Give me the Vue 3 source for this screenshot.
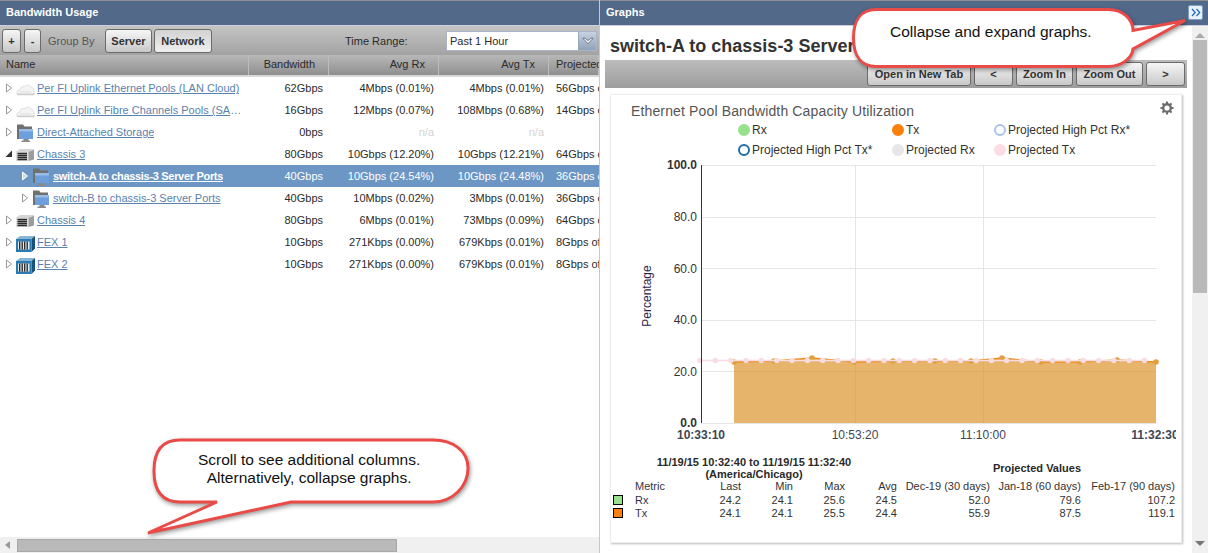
<template>
  <div class="page">
    <section class="left">
      <header class="pane-head">Bandwidth Usage</header>
      <div class="tools">
        <button class="btn plus">+</button>
        <button class="btn minus">-</button>
        <span class="group-by">Group By</span>
        <button class="btn server">Server</button>
        <button class="btn network">Network</button>
        <span class="time-label">Time Range:</span>
        <div class="select">
          <span class="select-text">Past 1 Hour</span>
          <span class="select-arrow">
            <svg width="12" height="8" viewBox="0 0 12 8"><path d="M.8 1.200h2.400L6 3.600l2.800-2.400h2.400L6 6.800z" fill="#eef2f6" stroke="#56646f" stroke-width=".8"/></svg>
          </span>
        </div>
      </div>
      <div class="cols">
        <span class="c-name">Name</span>
        <span class="c-bw">Bandwidth</span>
        <span class="c-rx">Avg Rx</span>
        <span class="c-tx">Avg Tx</span>
        <span class="c-pr">Projected</span>
      </div>
      <div class="rows">
        <div v-for="row in rows" :key="row.name" class="row" :class="{ selected: row.selected }">
          <div class="name" :class="{ child: row.child }">
            <svg class="twisty" width="8" height="10" viewBox="0 0 8 10">
              <path v-if="row.open" d="M7 1.500V8H.5z" fill="#333"/>
              <path v-else d="M1.500 1v8L6.500 5z" :fill="row.selected ? '#cfdcec' : '#fff'" :stroke="row.selected ? '#fff' : '#999'"/>
            </svg>
            <svg v-if="row.icon === 'cloud'" class="icon" width="20" height="20" viewBox="0 0 20 20">
              <path d="M1 16c-.8-2 .5-3.600 2.500-3.800C4 9.500 6.500 7.800 9 8.500c1.500-2 5-1.800 6 .7 2.200.3 3.600 2.500 3 6.800z" fill="#f4f4f4" stroke="#dedede"/>
              <path d="M1 16.500h17.500" stroke="#cdcdcd" stroke-width="1.500"/>
              <path d="M4 13h11v2.500H4z" fill="#e8e8e8"/>
            </svg>
            <svg v-else-if="row.icon === 'folder'" class="icon" width="20" height="20" viewBox="0 0 20 20">
              <path d="M1 2.500h6L8.500 4.500H16V7H3.500v10H1z" fill="#707070"/>
              <path d="M3 7h14v10H3z" fill="#6c9fdc"/>
              <path d="M3 7h14v2.500H3z" fill="#98bce6"/>
              <path d="M7.500 17h5v1.500H14V20H5.500v-1.500h2z" fill="#8a8a8a"/>
            </svg>
            <svg v-else-if="row.icon === 'chassis'" class="icon" width="20" height="20" viewBox="0 0 20 20">
              <path d="M0 7.500L4 5h14v2l-5 1.500H0z" fill="#d4d4d4"/>
              <path d="M0 7.500h12.500V17H0z" fill="#dedede"/>
              <path d="M12.500 8L18 6v9.500L12.500 17z" fill="#9c9c9c"/>
              <path d="M1.500 9.500h9.500M1.500 11.500h9.500M1.500 13.500h9.500M1.500 15.500h9.500" stroke="#2a2a2a" stroke-width="1.300"/>
            </svg>
            <svg v-else class="icon" width="20" height="20" viewBox="0 0 20 20">
              <path d="M0 7l4-3h15l-3.500 3z" fill="#84b6da"/>
              <path d="M15.500 7L19 4v12.500L15.500 20z" fill="#16517c"/>
              <path d="M0 7h15.500v13H0z" fill="#2b7bb0"/>
              <path d="M2 9.500h11.500v8H2z" fill="#e2ebf0"/>
              <path d="M3.700 9.500v8M6.200 9.500v8M8.700 9.500v8M11.200 9.500v8" stroke="#222" stroke-width="1.300"/>
            </svg>
            <a class="link">{{ row.name }}</a>
          </div>
          <span class="v-bw">{{ row.bw }}</span>
          <span class="v-rx" :class="{ na: row.rx === 'n/a' }">{{ row.rx }}</span>
          <span class="v-tx" :class="{ na: row.tx === 'n/a' }">{{ row.tx }}</span>
          <span class="v-pr">{{ row.pr }}</span>
        </div>
      </div>
      <div class="hscroll">
        <svg width="8" height="10" viewBox="0 0 8 10"><path d="M6 1v8L1 5z" fill="#999"/></svg>
        <div class="hthumb"></div>
      </div>
    </section>

    <section class="right">
      <header class="pane-head">Graphs</header>
      <div class="right-body">
        <div class="graph-area">
          <h1 class="graph-title">switch-A to chassis-3 Server Ports</h1>
          <div class="graph-tools">
            <button class="btn open-tab">Open in New Tab</button>
            <button class="btn nav">&lt;</button>
            <button class="btn zoom-in">Zoom In</button>
            <button class="btn zoom-out">Zoom Out</button>
            <button class="btn nav">&gt;</button>
          </div>
          <div class="card">
            <div class="card-title">Ethernet Pool Bandwidth Capacity Utilization</div>
            <svg class="gear" width="14" height="14" viewBox="0 0 14 14">
              <circle cx="7" cy="7" r="3.800" fill="none" stroke="#6d6d6d" stroke-width="2.400"/>
              <path d="M7 .5v2.500M7 11v2.500M.5 7H3M11 7h2.500M2.400 2.400l1.800 1.800M9.800 9.800l1.800 1.800M2.400 11.600l1.800-1.800M9.800 4.200l1.800-1.800" stroke="#6d6d6d" stroke-width="2"/>
            </svg>
            <div class="legend">
              <span v-for="item in legend" :key="item.label" class="legend-item">
                <i class="dot" :style="{ background: item.fill, borderColor: item.line }"></i>{{ item.label }}
              </span>
            </div>
            <svg class="chart" width="554" height="284" viewBox="0 0 554 284">
              <g stroke="#e6e6e6">
                <line v-for="y in gridY" :key="y" x1="79" x2="534" :y1="y" :y2="y"/>
                <line x1="233.500" x2="233.500" y1="9" y2="267"/>
                <line x1="361.500" x2="361.500" y1="9" y2="267"/>
              </g>
              <path :d="txArea" fill="#d98f1e" fill-opacity=".66"/>
              <polyline :points="txLine" fill="none" stroke="#f28a1c" stroke-width="1.500"/>
              <circle v-for="p in txPoints" :key="p[0]" :cx="p[0]" :cy="p[1]" r="2.800" fill="#e0a040"/>
              <line x1="78" x2="524" y1="204.500" y2="204.500" stroke="#f8dce3" stroke-width="1.500"/>
              <circle v-for="x in pinkDots" :key="x" :cx="x" cy="204.500" r="2.700" fill="#f8dce3"/>
              <line x1="79.500" x2="79.500" y1="9" y2="267" stroke="#333"/>
              <g class="ytick">
                <text x="75" y="13" font-weight="700" fill="#111">100.0</text>
                <text x="75" y="65">80.0</text>
                <text x="75" y="116.500">60.0</text>
                <text x="75" y="168">40.0</text>
                <text x="75" y="219.500">20.0</text>
                <text x="75" y="271" font-weight="700" fill="#111">0.0</text>
              </g>
              <text class="yaxis" transform="translate(29 140) rotate(-90)" text-anchor="middle">Percentage</text>
              <g class="xtick" text-anchor="middle">
                <text x="79" y="283" font-weight="700" fill="#111">10:33:10</text>
                <text x="233" y="283">10:53:20</text>
                <text x="361" y="283">11:10:00</text>
                <text x="533" y="283" font-weight="700" fill="#111">11:32:30</text>
              </g>
            </svg>
            <div class="stats">
              <div class="range">11/19/15 10:32:40 to 11/19/15 11:32:40<br>(America/Chicago)</div>
              <div class="proj">Projected Values</div>
              <div class="stat-table">
                <span></span><span class="tl">Metric</span>
                <span v-for="h in statHead" :key="h">{{ h }}</span>
                <template v-for="s in stats" :key="s.name">
                  <i class="swatch" :style="{ background: s.color }"></i>
                  <span class="tl">{{ s.name }}</span>
                  <span v-for="(v, i) in s.values" :key="i">{{ v }}</span>
                </template>
              </div>
            </div>
          </div>
        </div>
        <div class="vscroll">
          <svg width="10" height="6" viewBox="0 0 10 6"><path d="M0 6l5-5 5 5z" fill="#aaa"/></svg>
          <div class="vthumb"></div>
          <svg width="10" height="6" viewBox="0 0 10 6"><path d="M0 0l5 5 5-5z" fill="#777"/></svg>
        </div>
      </div>
      <button class="collapse">
        <svg width="10" height="9" viewBox="0 0 10 9"><path d="M1 1l3.200 3.500L1 8M5.500 1l3.200 3.500L5.500 8" fill="none" stroke="#2a6cc0" stroke-width="1.300"/></svg>
      </button>
    </section>

    <div class="callout top-callout">
      <svg class="bubble" width="345" height="60" viewBox="0 0 345 60">
        <path d="M24 1.500H256C272 1.500 281 12 281 22.500L333 12.500 281 41C280 50 270 58.500 256 58.500H24C10 58.500 1.500 49 1.500 30S10 1.500 24 1.500Z"/>
      </svg>
      <span class="callout-text one">Collapse and expand graphs.</span>
    </div>
    <div class="callout bottom-callout">
      <svg class="bubble" width="330" height="104" viewBox="0 0 330 104">
        <path d="M32 4H285C305 4 320 15 320 32 320 50 305 66 285 66H143L0 97 69 66H32C14 66 6 55 6 35 6 15 14 4 32 4Z"/>
      </svg>
      <span class="callout-text two">Scroll to see additional columns.<br>Alternatively, collapse graphs.</span>
    </div>
  </div>
</template>

<script setup>
const rows = [
  { name: 'Per FI Uplink Ethernet Pools (LAN Cloud)', icon: 'cloud', bw: '62Gbps', rx: '4Mbps (0.01%)', tx: '4Mbps (0.01%)', pr: '56Gbps of 80Gbps' },
  { name: 'Per FI Uplink Fibre Channels Pools (SAN Cloud)', icon: 'cloud', bw: '16Gbps', rx: '12Mbps (0.07%)', tx: '108Mbps (0.68%)', pr: '14Gbps of 16Gbps' },
  { name: 'Direct-Attached Storage', icon: 'folder', bw: '0bps', rx: 'n/a', tx: 'n/a', pr: '' },
  { name: 'Chassis 3', icon: 'chassis', open: true, bw: '80Gbps', rx: '10Gbps (12.20%)', tx: '10Gbps (12.21%)', pr: '64Gbps of 80Gbps' },
  { name: 'switch-A to chassis-3 Server Ports', icon: 'folder', child: true, selected: true, bw: '40Gbps', rx: '10Gbps (24.54%)', tx: '10Gbps (24.48%)', pr: '36Gbps of 40Gbps' },
  { name: 'switch-B to chassis-3 Server Ports', icon: 'folder', child: true, bw: '40Gbps', rx: '10Mbps (0.02%)', tx: '3Mbps (0.01%)', pr: '36Gbps of 40Gbps' },
  { name: 'Chassis 4', icon: 'chassis', bw: '80Gbps', rx: '6Mbps (0.01%)', tx: '73Mbps (0.09%)', pr: '64Gbps of 80Gbps' },
  { name: 'FEX 1', icon: 'fex', bw: '10Gbps', rx: '271Kbps (0.00%)', tx: '679Kbps (0.01%)', pr: '8Gbps of 10Gbps' },
  { name: 'FEX 2', icon: 'fex', bw: '10Gbps', rx: '271Kbps (0.00%)', tx: '679Kbps (0.01%)', pr: '8Gbps of 10Gbps' },
]

const legend = [
  { label: 'Rx', fill: '#98e08c', line: '#98e08c' },
  { label: 'Tx', fill: '#fb7f0c', line: '#fb7f0c' },
  { label: 'Projected High Pct Rx*', fill: '#fff', line: '#a9c4e8' },
  { label: 'Projected High Pct Tx*', fill: '#fff', line: '#1f6fa8' },
  { label: 'Projected Rx', fill: '#e6e6ea', line: '#e6e6ea' },
  { label: 'Projected Tx', fill: '#fbdde6', line: '#fbdde6' },
]

const gridY = [9.5, 61.5, 112.5, 164.5, 215.5, 267.5]

// x, y inside the chart svg
const txPoints = [
  [112, 206], [152, 205], [190, 202], [232, 206], [271, 205], [313, 205],
  [349, 205], [380, 202], [419, 206], [458, 206], [495, 204], [534, 206],
]
const txLine = txPoints.map((p) => p.join(',')).join(' ')
const txArea = `M112 267 L${txPoints.map((p) => p.join(' ')).join(' L')} L534 267 Z`
const pinkDots = Array.from({ length: 30 }, (_, i) => 78 + i * 15.33)

const statHead = ['Last', 'Min', 'Max', 'Avg', 'Dec-19 (30 days)', 'Jan-18 (60 days)', 'Feb-17 (90 days)']
const stats = [
  { name: 'Rx', color: '#98e08c', values: ['24.2', '24.1', '25.6', '24.5', '52.0', '79.6', '107.2'] },
  { name: 'Tx', color: '#fb7f0c', values: ['24.1', '24.1', '25.5', '24.4', '55.9', '87.5', '119.1'] },
]
</script>

<style>
html, body {
  margin: 0;
  background: #fff;
  overflow: hidden;
}
</style>

<style scoped>
.page {
  position: relative;
  display: flex;
  width: 1208px;
  height: 553px;
  overflow: hidden;
  font-family: "Liberation Sans", Arial, sans-serif;
  font-size: 11px;
  color: #2a2a2a;
}

.left {
  display: flex;
  flex-direction: column;
  width: 599px;
  height: 100%;
  flex: none;
  border-right: 1px solid #c8c8c8;
}

.right {
  position: relative;
  display: flex;
  flex-direction: column;
  flex: 1;
  min-width: 0;
}

.pane-head {
  height: 24px;
  line-height: 22px;
  padding-left: 6px;
  border-top: 1px solid #8f8f8f;
  border-bottom: 1px solid #c9d1dc;
  background: #52698a;
  color: #fff;
  font-size: 11px;
  font-weight: 700;
  flex: none;
}

.tools {
  display: flex;
  align-items: center;
  height: 29px;
  padding-left: 2px;
  background: linear-gradient(#c4c4c4, #a2a2a2);
  flex: none;
}

.btn {
  height: 24px;
  padding: 0;
  border: 1px solid #6b6b6b;
  border-radius: 3px;
  background: linear-gradient(#f6f6f6, #c8c8c8);
  font-family: inherit;
  font-size: 11px;
  font-weight: 700;
  color: #333;
}

.plus {
  width: 19px;
}

.minus {
  width: 17px;
  margin-left: 3px;
}

.group-by {
  margin: 0 11px 0 7px;
  width: 46px;
  color: #555;
  white-space: nowrap;
}

.server {
  width: 47px;
}

.network {
  width: 58px;
  margin-left: 2px;
  background: linear-gradient(#d2d2d2, #efefef);
}

.time-label {
  margin-left: 133px;
  width: 101px;
}

.select {
  display: flex;
  box-sizing: border-box;
  width: 151px;
  height: 20px;
  border: 1px solid #a9b5c6;
  background: #fff;
}

.select-text {
  flex: 1;
  padding-left: 3px;
  line-height: 18px;
}

.select-arrow {
  display: flex;
  align-items: center;
  justify-content: center;
  width: 17px;
  background: linear-gradient(#c6d3e2, #8fa3b8);
  border-left: 1px solid #97a6b8;
}

.cols {
  display: grid;
  grid-template-columns: 249px 80px 110px 110px 1fr;
  height: 20px;
  line-height: 19px;
  background: linear-gradient(#b8b8b8, #8f8f8f);
  border-bottom: 2px solid #d8d8d8;
  flex: none;
}

.cols span {
  box-shadow: inset -1px 0 #bdbdbd;
  overflow: hidden;
  white-space: nowrap;
}

.c-name {
  padding-left: 6px;
}

.c-bw,
.c-rx,
.c-tx {
  text-align: right;
  padding-right: 14px;
}

.c-pr {
  padding-left: 7px;
}

.rows {
  flex: 1;
  min-height: 0;
}

.row {
  display: grid;
  grid-template-columns: 249px 80px 110px 110px 1fr;
  height: 22px;
  line-height: 22px;
  white-space: nowrap;
  overflow: hidden;
}

.row.selected {
  background: #6c96c4;
  color: #fff;
}

.name {
  display: flex;
  align-items: center;
  min-width: 0;
  padding-left: 5px;
}

.name.child {
  padding-left: 21px;
}

.twisty {
  flex: none;
}

.icon {
  flex: none;
  margin-left: 3px;
}

.link {
  margin-left: 1px;
  color: #5a82ad;
  text-decoration: underline;
  overflow: hidden;
  text-overflow: ellipsis;
}

.selected .link {
  color: #fff;
  font-weight: 700;
  letter-spacing: -.31px;
}

.v-bw,
.v-rx,
.v-tx {
  text-align: right;
  padding-right: 5px;
}

.v-bw {
  padding-right: 6px;
}

.v-pr {
  padding-left: 7px;
  overflow: hidden;
}

.na {
  color: #d4d4d4;
}

.hscroll {
  display: flex;
  align-items: center;
  height: 16px;
  padding-left: 4px;
  background: #f0f0f0;
  flex: none;
}

.hthumb {
  width: 380px;
  height: 13px;
  margin-left: 5px;
  background: #b9b9b9;
  border: 1px solid #a8a8a8;
  box-sizing: border-box;
}

.right-body {
  display: flex;
  flex: 1;
  min-height: 0;
}

.graph-area {
  flex: 1;
  min-width: 0;
  padding: 0 5px;
  overflow: hidden;
}

.graph-title {
  margin: 8px 0 1px 5px;
  font-size: 18px;
  line-height: 25px;
  color: #333;
  white-space: nowrap;
}

.graph-tools {
  display: flex;
  justify-content: flex-end;
  gap: 3px;
  align-items: center;
  height: 28px;
  padding-right: 2px;
  background: linear-gradient(#bcbcbc, #9d9d9d);
}

.open-tab {
  width: 104px;
}

.nav {
  width: 39px;
}

.zoom-in {
  width: 57px;
}

.zoom-out {
  width: 67px;
}

.card {
  position: relative;
  width: 570px;
  height: 447px;
  margin: 6px 0 0 5px;
  border: 1px solid #eee;
  box-shadow: 1px 1px 2px #bbb;
  background: #fff;
}

.card-title {
  padding: 8px 0 0 20px;
  height: 17px;
  line-height: 17px;
  font-size: 14px;
  letter-spacing: .14px;
  color: #555;
}

.gear {
  position: absolute;
  right: 7px;
  top: 6px;
}

.legend {
  display: grid;
  grid-template-columns: 154px 102px auto;
  margin-left: 127px;
  font-size: 12px;
  color: #333;
}

.legend-item {
  display: flex;
  align-items: center;
  height: 20px;
  white-space: nowrap;
}

.dot {
  width: 8px;
  height: 8px;
  border: 2px solid;
  border-radius: 50%;
  margin-right: 2px;
}

.chart {
  display: block;
  margin: -4px 0 0 11px;
  overflow: hidden;
}

.ytick text {
  font-size: 12px;
  text-anchor: end;
  fill: #333;
}

.yaxis {
  font-size: 12px;
  fill: #2c1e4a;
}

.xtick text {
  font-size: 12px;
  fill: #3d4654;
}

.stats {
  position: relative;
  margin-top: 16px;
  font-size: 11px;
}

.range {
  width: 230px;
  margin-left: 28px;
  text-align: center;
  font-weight: 700;
  line-height: 12px;
  white-space: nowrap;
}

.proj {
  position: absolute;
  top: 6px;
  right: 100px;
  font-weight: 700;
}

.stat-table {
  display: grid;
  grid-template-columns: 15px 52px 61px 52px 52px 52px 93px 91px 94px;
  grid-template-rows: 14px 13px 14px;
  margin: -1px 0 0 2px;
  text-align: right;
  align-items: center;
  color: #333;
  white-space: nowrap;
}

.tl {
  text-align: left;
  padding-left: 7px;
  color: #334;
}

.swatch {
  box-sizing: border-box;
  width: 10px;
  height: 10px;
  border: 1px solid #000;
}

.vscroll {
  display: flex;
  flex-direction: column;
  align-items: center;
  justify-content: space-between;
  box-sizing: border-box;
  width: 16px;
  flex: none;
  padding: 6px 0;
  background: #f0f0f0;
}

.vthumb {
  width: 14px;
  height: 253px;
  margin-top: 2px;
  margin-bottom: auto;
  background: #b9b9b9;
}

.collapse {
  position: absolute;
  right: 5px;
  top: 5px;
  display: flex;
  align-items: center;
  justify-content: center;
  width: 15px;
  height: 15px;
  padding: 0;
  border: 1px solid #7fa0c8;
  border-radius: 2px;
  background: #eaf2fc;
}

.callout {
  position: absolute;
  font-size: 15.500px;
  color: #111;
  text-align: center;
}

.top-callout {
  left: 852px;
  top: 8px;
  width: 345px;
  height: 60px;
}

.bottom-callout {
  left: 148px;
  top: 436px;
  width: 330px;
  height: 104px;
}

.bubble {
  position: absolute;
  left: 0;
  top: 0;
  overflow: visible;
  filter: drop-shadow(1px 2px 2px rgba(0, 0, 0, .4));
}

.bubble path {
  fill: #fff;
  stroke: #e84b48;
  stroke-width: 3;
}

.callout-text {
  position: absolute;
  white-space: nowrap;
  line-height: 18px;
}

.one {
  left: 38px;
  top: 15px;
}

.two {
  left: 50px;
  top: 15px;
}
</style>
